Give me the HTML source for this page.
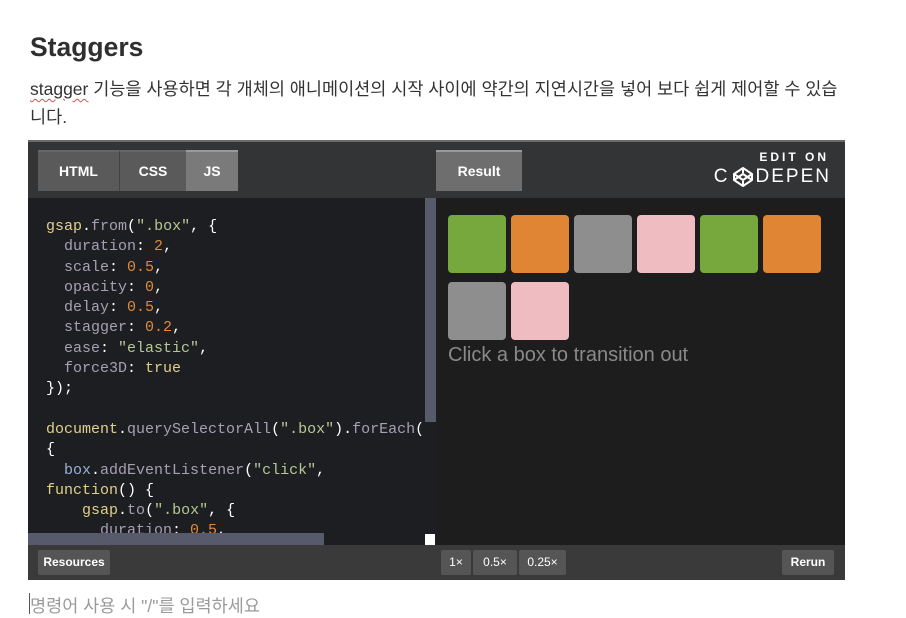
<!DOCTYPE html>
<html><head><meta charset="utf-8">
<style>
*{margin:0;padding:0;box-sizing:border-box}
body{width:906px;height:615px;background:#fff;position:relative;overflow:hidden;font-family:"Liberation Sans","Noto Sans CJK KR",sans-serif}
h1{position:absolute;left:30px;top:32px;font-size:26.5px;font-weight:bold;color:#2f2f2f}
p.t{position:absolute;left:30px;top:75px;font-size:17.5px;line-height:28px;color:#333}
.sq{text-decoration:underline wavy #d9534f;text-decoration-thickness:1px;text-underline-offset:3px}
.emb{position:absolute;left:28px;top:140px;width:817px;height:440px;background:#1d1e22}
.top{position:absolute;left:0;top:0;width:817px;height:58px;background:#333436;border-top:2px solid #6a6a6a}
.tab{position:absolute;top:8px;height:41px;background:#5a5a5a;color:#fff;font-size:14px;font-weight:bold;line-height:39px;text-align:center;border-top:2px solid #666}
.code{position:absolute;left:18px;top:77px;font-family:"Liberation Mono",monospace;font-size:15px;line-height:20.3px;color:#fff;white-space:pre}
.y{color:#e0d08a}.g{color:#a7a0b3}.s{color:#b9c795}.n{color:#e08a3c}.b{color:#9ab0d8}
.vs{position:absolute;left:397px;top:58px;width:11px;height:224px;background:#575a6a}
.hs{position:absolute;left:0;top:393px;width:296px;height:12px;background:#575a6a}
.res{position:absolute;left:409px;top:58px;width:408px;height:347px;background:#1d1d1d}
.box{position:absolute;width:58px;height:58px;border-radius:4px}
.bot{position:absolute;left:0;top:405px;width:817px;height:35px;background:#3a3a3a}
.btn{position:absolute;top:5px;height:25px;background:#555;color:#fff;font-size:12px;font-weight:bold;line-height:25px;text-align:center;border-radius:2px}
</style></head><body>
<h1>Staggers</h1>
<p class="t"><span class="sq">stagger</span> 기능을 사용하면 각 개체의 애니메이션의 시작 사이에 약간의 지연시간을 넣어 보다 쉽게 제어할 수 있습<br>니다.</p>
<div class="emb">
 <div class="top">
  <div class="tab" style="left:10px;width:81px">HTML</div>
  <div class="tab" style="left:91px;width:67px;border-left:1px solid #444">CSS</div>
  <div class="tab" style="left:158px;width:52px;background:#7a7a7a;border-top-color:#9a9a9a">JS</div>
  <div class="tab" style="left:408px;width:86px;background:#6e6e6e;border-top-color:#999">Result</div>
  <div style="position:absolute;right:16px;top:8px;color:#fff;font-size:12px;letter-spacing:3px;font-weight:bold">EDIT ON</div>
  <div style="position:absolute;right:14px;top:24px;color:#fff;font-size:19px;letter-spacing:2px;display:flex;align-items:center">C<svg width="22" height="22" viewBox="0 0 22 22" style="margin:0 2px"><g fill="none" stroke="#fff" stroke-width="2" stroke-linejoin="round"><path d="M11 2L20 8V14L11 20L2 14V8Z"/><path d="M11 2V7M11 15V20M2 8L11 14L20 8M2 14L11 8L20 14"/></g></svg>DEPEN</div>
 </div>
 <div class="code"><span class="y">gsap</span>.<span class="g">from</span>(<span class="s">".box"</span>, {
  <span class="g">duration</span>: <span class="n">2</span>,
  <span class="g">scale</span>: <span class="n">0.5</span>,
  <span class="g">opacity</span>: <span class="n">0</span>,
  <span class="g">delay</span>: <span class="n">0.5</span>,
  <span class="g">stagger</span>: <span class="n">0.2</span>,
  <span class="g">ease</span>: <span class="s">"elastic"</span>,
  <span class="g">force3D</span>: <span class="y">true</span>
});

<span class="y">document</span>.<span class="g">querySelectorAll</span>(<span class="s">".box"</span>).<span class="g">forEach</span>(
{
  <span class="b">box</span>.<span class="g">addEventListener</span>(<span class="s">"click"</span>,
<span class="y">function</span>() {
    <span class="y">gsap</span>.<span class="g">to</span>(<span class="s">".box"</span>, {
      <span class="g">duration</span>: <span class="n">0.5</span>,</div>
 <div class="vs"></div>
 <div class="hs"></div>
 <div style="position:absolute;left:397px;top:394px;width:10px;height:11px;background:#fff"></div>
 <div class="res">
  <div class="box" style="left:11px;top:17px;background:#76a83e"></div>
  <div class="box" style="left:74px;top:17px;background:#e08534"></div>
  <div class="box" style="left:137px;top:17px;background:#8e8e8e"></div>
  <div class="box" style="left:200px;top:17px;background:#efbcc2"></div>
  <div class="box" style="left:263px;top:17px;background:#76a83e"></div>
  <div class="box" style="left:326px;top:17px;background:#e08534"></div>
  <div class="box" style="left:11px;top:84px;background:#8e8e8e"></div>
  <div class="box" style="left:74px;top:84px;background:#efbcc2"></div>
  <div style="position:absolute;left:11px;top:146px;color:#8a8a8a;font-size:20px">Click a box to transition out</div>
 </div>
 <div class="bot">
  <div class="btn" style="left:10px;width:72px">Resources</div>
  <div class="btn" style="left:413px;width:30px;font-weight:normal">1×</div>
  <div class="btn" style="left:445px;width:44px;font-weight:normal">0.5×</div>
  <div class="btn" style="left:491px;width:47px;font-weight:normal">0.25×</div>
  <div class="btn" style="left:754px;width:52px">Rerun</div>
 </div>
</div>
<div style="position:absolute;left:29px;top:593px;width:1px;height:21px;background:#555"></div>
<div style="position:absolute;left:30px;top:593px;font-size:17.5px;color:#9a9a9a">명령어 사용 시 "/"를 입력하세요</div>
</body></html>
